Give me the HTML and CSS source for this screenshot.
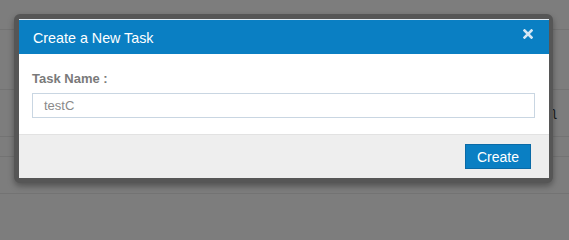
FILE: index.html
```html
<!DOCTYPE html>
<html>
<head>
<meta charset="utf-8">
<link rel="stylesheet" href="styles.css">
</head>
<body>
<div class="backdrop">
  <div class="bg-row r1"></div>
  <div class="bg-row r2"></div>
  <div class="bg-row r3"><span class="mark">ʅ</span></div>
  <div class="bg-row r4"></div>
  <div class="bg-row r5"></div>
  <div class="bg-row r6"></div>
</div>
<div class="modal">
  <div class="modal-inner">
    <div class="modal-header">
      <span class="title">Create a New Task</span>
      <svg class="close" width="10" height="10" viewBox="0 0 10 10"><path d="M1.5 1.5 L8.5 8.5 M8.5 1.5 L1.5 8.5" stroke="#d6e7f4" stroke-width="2.6" stroke-linecap="square"/></svg>
    </div>
    <div class="modal-body">
      <div class="label">Task Name :</div>
      <div class="input">testC</div>
    </div>
    <div class="modal-footer">
      <button class="btn">Create</button>
    </div>
  </div>
</div>
</body>
</html>
```

FILE: styles.css
```css
html {
  margin: 0;
  padding: 0;
  height: 213px;
  overflow: hidden;
  background: #7d7d7d;
}
body {
  margin: 0;
  padding: 0;
  width: 569px;
  height: 213px;
  background: #7d7d7d;
  font-family: "Liberation Sans", Arial, sans-serif;
  overflow: hidden;
  position: relative;
}
.backdrop {
  display: flex;
  flex-direction: column;
}
.bg-row {
  border-bottom: 1px solid #737373;
  position: relative;
}
.r1 { height: 29px; }
.r2 { height: 59px; }
.r3 { height: 46px; }
.r4 { height: 19px; }
.r5 { height: 36px; }
.r6 { height: 19px; border-bottom: none; }
.mark {
  position: absolute;
  left: 553px;
  top: 15px;
  font-size: 13px;
  color: #1a1a1a;
  line-height: 13px;
}
.modal {
  position: absolute;
  left: 14px;
  top: 14px;
  border: 5px solid #565656;
  border-right-width: 4px;
  border-radius: 6px;
  box-shadow: 0 3px 6px rgba(0, 0, 0, 0.35);
  background: #565656;
}
.modal-inner {
  width: 530px;
  background: #fff;
}
.modal-header {
  height: 34px;
  border-top: 1px solid #e6eef5;
  background: #0a7fc3;
  display: flex;
  align-items: center;
  justify-content: space-between;
  padding: 0 16px 0 14px;
}
.title {
  color: #fff;
  font-size: 14.3px;
  margin-top: 1px;
}
.close {
  display: block;
  margin-top: -6px;
}
.modal-body {
  padding: 16px 14px 16px 13px;
}
.label {
  font-size: 13px;
  font-weight: bold;
  color: #7a7a7a;
  line-height: 18px;
  height: 18px;
}
.input {
  margin-top: 5px;
  height: 23px;
  border: 1px solid #c9d6e2;
  box-sizing: content-box;
  font-size: 13px;
  color: #8a8a8a;
  line-height: 23px;
  padding-left: 11px;
}
.modal-footer {
  border-top: 1px solid #e2e2e2;
  background: #eeeeee;
  display: flex;
  justify-content: flex-end;
  align-items: flex-start;
  padding-right: 18px;
  box-sizing: border-box;
  height: 44px;
  padding-top: 9px;
}
.btn {
  width: 66px;
  height: 25px;
  background: #0a7fc3;
  border: 1px solid #0a6aa6;
  color: #fff;
  font-family: "Liberation Sans", Arial, sans-serif;
  font-size: 14px;
  padding: 0;
  margin: 0;
}
```
